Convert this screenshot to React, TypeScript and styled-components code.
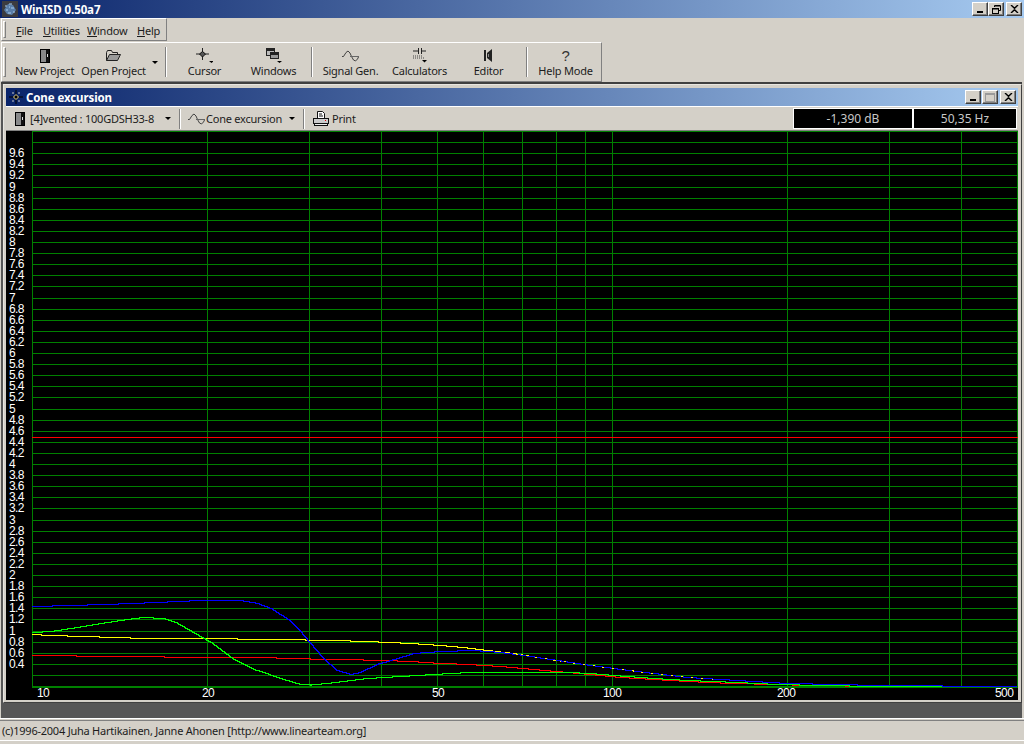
import styled, { createGlobalStyle } from 'styled-components';
import { ReactNode } from 'react';

const GlobalStyle = createGlobalStyle`
  html, body {
    margin: 0;
    padding: 0;
    background: #d4d0c8;
  }
  * {
    box-sizing: border-box;
  }
`;

const uiFont = `'Noto Sans', 'Liberation Sans', sans-serif`;

const Screen = styled.div`
  width: 1024px;
  height: 744px;
  display: flex;
  flex-direction: column;
  overflow: hidden;
  background: #d4d0c8;
  color: #000;
  font: 11px/13px ${uiFont};
  letter-spacing: -0.23px;
`;

const TitleBar = styled.div<{ $small?: boolean }>`
  height: 18px;
  flex: none;
  display: flex;
  align-items: center;
  padding: ${({ $small }) => ($small ? '0 2px 0 3px' : '0 2px 0 2px')};
  background: linear-gradient(90deg, #0a246a, #a6caf0);
  color: #fff;
  font-weight: 700;
  font-size: 11.5px;
  letter-spacing: -0.1px;
`;

const TitleText = styled.span`
  flex: 1;
  margin-left: 3px;
  white-space: nowrap;
`;

const CaptionButton = styled.div<{ $gap?: number; $off?: boolean }>`
  width: 16px;
  height: 14px;
  margin-left: ${({ $gap }) => $gap ?? 0}px;
  display: flex;
  align-items: center;
  justify-content: center;
  background: #d4d0c8;
  border: 1px solid;
  border-color: #fff #404040 #404040 #fff;
  box-shadow: inset -1px -1px 0 #808080;
  color: ${({ $off }) => ($off ? '#9a9a9a' : '#000')};
`;

const MenuRow = styled.div`
  height: 24px;
  flex: none;
  padding: 0 0 1px 1px;
`;

const Band = styled.div<{ $width: number }>`
  width: ${({ $width }) => $width}px;
  height: 100%;
  display: flex;
  align-items: center;
  border: 1px solid;
  border-color: #fff #808080 #808080 #fff;
`;

const Gripper = styled.div`
  width: 3px;
  height: 80%;
  flex: none;
  margin-left: 1px;
  border: 1px solid;
  border-color: #fff #808080 #808080 #fff;
`;

const MenuItem = styled.span<{ $width: number }>`
  width: ${({ $width }) => $width}px;
  flex: none;
  padding-top: 2px;
  color: #1c1c1c;
  white-space: nowrap;
  u {
    text-underline-offset: 1px;
  }
`;

const ToolRow = styled.div`
  height: 40px;
  flex: none;
`;

const ToolBand = styled(Band)`
  margin-left: 1px;
`;

const ToolButton = styled.div<{ $width?: number }>`
  width: ${({ $width }) => $width ?? 69}px;
  height: 100%;
  flex: none;
  display: flex;
  flex-direction: column;
  align-items: center;
  padding-top: 5px;
  color: #1c1c1c;
  white-space: nowrap;
`;

const IconSlot = styled.div`
  height: 15px;
  flex: none;
  margin-bottom: 1px;
  display: flex;
  align-items: center;
  justify-content: center;
`;

const HelpGlyph = styled.span`
  font: 15px/15px 'Liberation Sans', sans-serif;
  color: #333;
`;

const Separator = styled.div<{ $height?: number; $margin?: string }>`
  width: 2px;
  height: ${({ $height }) => $height ?? 30}px;
  flex: none;
  margin: ${({ $margin }) => $margin ?? '0 3px'};
  border-left: 1px solid #808080;
  border-right: 1px solid #fff;
`;

const DropSlot = styled.div<{ $width: number }>`
  width: ${({ $width }) => $width}px;
  flex: none;
  display: flex;
  justify-content: center;
`;

const Arrow = styled.div`
  width: 0;
  height: 0;
  border-left: 3px solid transparent;
  border-right: 3px solid transparent;
  border-top: 3px solid #000;
`;

const Mdi = styled.div`
  flex: 1;
  min-height: 0;
  margin-right: 2px;
  margin-left: 1px;
  padding: 0 0 15px 2px;
  display: flex;
  background: #565656;
  border-top: 2px solid #404040;
`;

const ChildWindow = styled.div`
  flex: 1;
  min-width: 0;
  display: flex;
  flex-direction: column;
  padding: 3px 3px 2px 2px;
  background: #d4d0c8;
  border: 1px solid;
  border-color: #e8e6e0 #404040 #404040 #e8e6e0;
`;

const ChildBar = styled.div`
  height: 25px;
  flex: none;
  display: flex;
  align-items: center;
  padding-left: 2px;
  border-top: 1px solid #fff;
  border-bottom: 1px solid #808080;
  color: #1c1c1c;
  white-space: nowrap;
`;

const ChildLabel = styled.span<{ $width: number }>`
  width: ${({ $width }) => $width}px;
  flex: none;
`;

const ChildIcon = styled.div<{ $left: number; $right: number }>`
  flex: none;
  display: flex;
  margin: 0 ${({ $right }) => $right}px 0 ${({ $left }) => $left}px;
`;

const Readouts = styled.div`
  margin-left: auto;
  margin-right: 1px;
  display: flex;
  gap: 2px;
  background: #fff;
  padding: 1px;
`;

const Readout = styled.div<{ $width: number }>`
  width: ${({ $width }) => $width}px;
  height: 19px;
  display: flex;
  align-items: center;
  justify-content: center;
  background: #000;
  color: #c8c8c8;
  font-size: 12px;
  letter-spacing: 0;
`;

const Chart = styled.svg`
  display: block;
  flex: 1;
  min-height: 0;
  width: 100%;
  background: #000;
  shape-rendering: crispEdges;
`;

const AxisText = styled.text`
  font: 12px 'Liberation Sans', sans-serif;
  letter-spacing: -0.6px;
  fill: #fff;
`;

const StatusBar = styled.div`
  height: 26px;
  flex: none;
  border-top: 1px solid #fff;
`;

const StatusPanel = styled.div`
  height: 21px;
  margin-top: 1px;
  padding-left: 2px;
  display: flex;
  align-items: center;
  border-top: 1px solid #808080;
  border-bottom: 1px solid #fff;
  color: #1c1c1c;
  white-space: nowrap;
`;

// ---- chart data, in page pixels, the svg viewBox starts at the chart's corner

const yOf = (v: number) => 686.5 - v * 55.5;
const xOf = (hz: number) => 32.5 + Math.log10(hz / 10) * 580;

const freqLines = [10, 20, 30, 40, 50, 60, 70, 80, 90, 100, 200, 300, 400, 500];
const freqLabels = [
  { text: '10', x: 37 },
  { text: '20', x: 202 },
  { text: '50', x: 432 },
  { text: '100', x: 603 },
  { text: '200', x: 777 },
  { text: '500', x: 995 },
];
const levels = Array.from({ length: 50 }, (_, i) => Math.round((i + 1) * 2) / 10);

// the program drew its curves pixel by pixel, so walk the points in whole pixels.
// flat runs become steps, steep runs stay one pixel wide diagonals
const stepPath = (pts: number[][]) => {
  let d = `M${pts[0][0]} ${Math.round(pts[0][1]) + 0.5}`;
  for (let i = 1; i < pts.length; i++) {
    const [x0, y0] = pts[i - 1];
    const [x1, y1] = pts[i];
    const steep = Math.abs(y1 - y0) >= (x1 - x0) * 0.4;
    for (let x = x0 + 1; x <= x1; x++) {
      const y = Math.round(y0 + ((y1 - y0) * (x - x0)) / (x1 - x0)) + 0.5;
      d += steep ? `L${x} ${y}` : `H${x}V${y}`;
    }
  }
  return d;
};

const bluePts = [
  [32, 606], [70, 605], [103, 604], [132, 603], [155, 602], [177, 601], [200, 600], [240, 600],
  [257, 603], [273, 609], [290, 620], [300, 630], [310, 642], [323, 657], [337, 670], [350, 674],
  [360, 672], [380, 663], [397, 658], [413, 653], [440, 651], [473, 650], [500, 652], [523, 655],
  [557, 660], [583, 664], [613, 668], [653, 673], [687, 677], [720, 679], [753, 681], [787, 683],
  [837, 684], [877, 685], [942, 685], [943, 686], [1017, 686],
];
const yellowPts = [
  [32, 634], [50, 635], [83, 636], [130, 637.5], [197, 638], [277, 639], [333, 640], [367, 641],
  [410, 643], [440, 645], [467, 647.5], [487, 650], [513, 653], [543, 658], [583, 664], [613, 668],
  [653, 673], [687, 677], [720, 679],
];
const redPts = [
  [32, 655], [76, 655], [77, 656], [164, 656], [165, 657], [276, 657], [277, 658], [343, 659],
  [383, 660], [410, 661], [433, 662.5], [467, 664], [500, 666], [533, 669], [567, 672], [600, 675],
  [620, 677], [653, 679], [687, 681], [720, 682.5], [770, 684], [813, 685], [877, 686],
];
const greenPts = [
  [32, 632], [50, 631], [77, 627], [100, 623], [130, 618.5], [143, 617], [163, 618], [177, 622.5],
  [193, 631.5], [213, 643], [233, 658], [257, 670], [280, 678], [300, 684], [310, 684.5], [330, 682.5],
  [367, 678], [400, 676], [433, 674], [477, 671.5], [533, 671.5], [567, 672], [590, 673], [620, 675.5],
  [653, 678], [687, 680], [737, 682], [777, 684], [820, 685], [877, 686], [943, 686],
];

// ---- small drawings

const Svg = ({ w, h, children }: { w: number; h: number; children: ReactNode }) => (
  <svg width={w} height={h} viewBox={`0 0 ${w} ${h}`} style={{ display: 'block' }}>
    {children}
  </svg>
);

const AppIcon = () => (
  <Svg w={16} h={16}>
    <rect width="16" height="16" fill="#3c3c40" />
    <path d="M2 9l4-6 5 1 3 5-4 5-5-1z" fill="#5a7ea8" />
    <path d="M3 5h2M7 3h3M4 9h2M9 7h3M6 12h3M11 11h2M7 6h1" stroke="#a6cdf0" />
  </Svg>
);

const BoxIcon = () => (
  <Svg w={10} h={14}>
    <rect x=".5" y=".5" width="9" height="13" fill="#8a8a8a" stroke="#000" />
    <rect x="6" y="1" width="3" height="12" fill="#111" />
    <rect x="7" y="5" width="1" height="3" fill="#ddd" />
  </Svg>
);

const FolderIcon = () => (
  <Svg w={15} h={11}>
    <path d="M.5 10.5V2.5l1-2h4l1 2h5v2" fill="none" stroke="#222" />
    <path d="M.5 10.5l3-6h11l-3 6z" fill="#9a9a9a" stroke="#222" />
  </Svg>
);

const CrossIcon = () => (
  <Svg w={17} h={15}>
    <path d="M6.5 0v12M0 6h13" stroke="#222" />
    <path d="M6.5 3.5L9.5 6 6.5 9 3.5 6z" fill="#555" stroke="#111" />
    <path d="M13 13h5l-2.5 2z" fill="#000" />
  </Svg>
);

const WindowsIcon = () => (
  <Svg w={16} h={15}>
    <rect x=".5" y=".5" width="8" height="7" fill="#bbb" stroke="#222" />
    <rect x="1" y="1" width="7" height="2" fill="#222" />
    <rect x="4.5" y="4.5" width="8" height="6" fill="#999" stroke="#222" />
    <rect x="5" y="5" width="7" height="2" fill="#222" />
    <path d="M11 13h5l-2.5 2z" fill="#000" />
  </Svg>
);

const WaveIcon = () => (
  <Svg w={17} h={12}>
    <path
      d="M0 6.500h1.500L4 2.500 6 1 8 3l1.500 3.500L11.500 10l2 1 2-2 1.500-3"
      fill="none"
      stroke="#333"
      strokeWidth="0.900"
    />
    <path d="M8 6.500h9" stroke="#666" />
  </Svg>
);

const CalcIcon = () => (
  <Svg w={16} h={15}>
    <path d="M1 3h5M6.500 0v6M9.500 0v6M10 3h4" stroke="#222" />
    <path d="M1 8h10M1 10h11" stroke="#444" strokeDasharray="1 1" />
    <path d="M10 12h5l-2.500 2.500z" fill="#000" />
  </Svg>
);

const SpeakerIcon = () => (
  <Svg w={9} h={13}>
    <rect x="0" y="1" width="2" height="11" fill="#222" />
    <path d="M3 4l5-4v13L3 9z" fill="#222" />
    <rect x="4" y="5" width="1" height="3" fill="#888" />
  </Svg>
);

const PrinterIcon = () => (
  <Svg w={16} h={16}>
    <path d="M4.500 7V.5h5l2 2V7" fill="#fff" stroke="#111" />
    <path d="M6 3h3M6 5h4" stroke="#111" />
    <rect x=".5" y="7.500" width="15" height="5" fill="#ccc" stroke="#111" />
    <rect x="12" y="9" width="1" height="1" fill="#d00" />
    <rect x="1.500" y="12.500" width="13" height="2" fill="#eee" stroke="#111" />
  </Svg>
);

const MinGlyph = () => (
  <Svg w={8} h={8}>
    <rect x="1" y="6" width="6" height="2" fill="currentColor" />
  </Svg>
);

const RestoreGlyph = () => (
  <Svg w={9} h={9}>
    <path d="M2.500 2V.5h6v5H7" fill="none" stroke="currentColor" />
    <rect x=".5" y="3.500" width="6" height="5" fill="none" stroke="currentColor" />
    <path d="M1 4h5M3 1h5" stroke="currentColor" />
  </Svg>
);

const MaxGlyph = () => (
  <Svg w={10} h={9}>
    <rect x=".5" y=".5" width="9" height="8" fill="none" stroke="currentColor" />
    <path d="M1 1.500h8" stroke="currentColor" />
  </Svg>
);

const CloseGlyph = () => (
  <Svg w={9} h={8}>
    <path d="M1 0l3.500 3.200L8 0M1 8l3.500-3.200L8 8" fill="none" stroke="currentColor" strokeWidth="1.400" />
  </Svg>
);

const ChildTitleIcon = () => (
  <Svg w={14} h={14}>
    <path d="M7 0v14M0 7h14" stroke="#000" />
    <path d="M7 4.500L9.500 7 7 9.500 4.500 7z" fill="#000" stroke="#e8d890" />
    <path d="M3 3h2M9 3h2M3 11h2M9 11h2" stroke="#c8c8c8" />
  </Svg>
);

const tools = [
  { label: 'Cursor', icon: <CrossIcon /> },
  { label: 'Windows', icon: <WindowsIcon /> },
];

const designTools = [
  { label: 'Signal Gen.', icon: <WaveIcon /> },
  { label: 'Calculators', icon: <CalcIcon /> },
  { label: 'Editor', icon: <SpeakerIcon /> },
];

export default function App() {
  return (
    <Screen>
      <GlobalStyle />
      <TitleBar>
        <AppIcon />
        <TitleText>WinISD 0.50a7</TitleText>
        <CaptionButton><MinGlyph /></CaptionButton>
        <CaptionButton><RestoreGlyph /></CaptionButton>
        <CaptionButton $gap={2}><CloseGlyph /></CaptionButton>
      </TitleBar>

      <MenuRow>
        <Band $width={166}>
          <Gripper />
          <MenuItem $width={10} />
          <MenuItem $width={27}><u>F</u>ile</MenuItem>
          <MenuItem $width={44}><u>U</u>tilities</MenuItem>
          <MenuItem $width={50}><u>W</u>indow</MenuItem>
          <MenuItem $width={26}><u>H</u>elp</MenuItem>
        </Band>
      </MenuRow>

      <ToolRow>
        <ToolBand $width={601}>
          <Gripper />
          <MenuItem $width={4} />
          <ToolButton><IconSlot><BoxIcon /></IconSlot>New Project</ToolButton>
          <ToolButton><IconSlot><FolderIcon /></IconSlot>Open Project</ToolButton>
          <DropSlot $width={14}><Arrow /></DropSlot>
          <Separator />
          {tools.map(t => (
            <ToolButton key={t.label}><IconSlot>{t.icon}</IconSlot>{t.label}</ToolButton>
          ))}
          <Separator />
          {designTools.map(t => (
            <ToolButton key={t.label}><IconSlot>{t.icon}</IconSlot>{t.label}</ToolButton>
          ))}
          <Separator />
          <ToolButton><IconSlot><HelpGlyph>?</HelpGlyph></IconSlot>Help Mode</ToolButton>
        </ToolBand>
      </ToolRow>

      <Mdi>
        <ChildWindow>
          <TitleBar $small>
            <ChildTitleIcon />
            <TitleText>Cone excursion</TitleText>
            <CaptionButton><MinGlyph /></CaptionButton>
            <CaptionButton $gap={1} $off><MaxGlyph /></CaptionButton>
            <CaptionButton $gap={2}><CloseGlyph /></CaptionButton>
          </TitleBar>
          <ChildBar>
            <ChildIcon $left={7} $right={5}><BoxIcon /></ChildIcon>
            <ChildLabel $width={126}>[4]vented : 100GDSH33-8</ChildLabel>
            <DropSlot $width={23}><Arrow /></DropSlot>
            <Separator $height={20} $margin="0 7px 0 0" />
            <ChildIcon $left={0} $right={1}><WaveIcon /></ChildIcon>
            <ChildLabel $width={75}>Cone excursion</ChildLabel>
            <DropSlot $width={22}><Arrow /></DropSlot>
            <Separator $height={20} $margin="0 8px 0 0" />
            <ChildIcon $left={0} $right={3}><PrinterIcon /></ChildIcon>
            <ChildLabel $width={30}>Print</ChildLabel>
            <Readouts>
              <Readout $width={118}>-1,390 dB</Readout>
              <Readout $width={102}>50,35 Hz</Readout>
            </Readouts>
          </ChildBar>
          <Chart viewBox="6 131 1012 569" preserveAspectRatio="none">
            {levels.map(v => (
              <line key={v} x1={32} x2={1018} y1={Math.floor(yOf(v)) + 0.5} y2={Math.floor(yOf(v)) + 0.5} stroke="#008000" />
            ))}
            {freqLines.map(f => (
              <line key={f} x1={Math.floor(xOf(f)) + 0.5} x2={Math.floor(xOf(f)) + 0.5} y1={131} y2={687} stroke="#008000" />
            ))}
            <line x1={32} x2={1018} y1={687} y2={687} stroke="#008000" strokeWidth={2} />
            <line x1={32} x2={1018} y1={437.5} y2={437.5} stroke="#ff0000" />
            <path d={stepPath(yellowPts)} fill="none" stroke="#ffff00" />
            <path d={stepPath(redPts)} fill="none" stroke="#ff0000" />
            <path d={stepPath(greenPts)} fill="none" stroke="#00ff00" />
            <path d={stepPath(bluePts)} fill="none" stroke="#0000ff" />
            <path d={stepPath(yellowPts.slice(11))} fill="none" stroke="#ffff00" strokeDasharray="2 9" />
            {levels.slice(1, 48).map(v => (
              <AxisText key={v} x={9} y={yOf(v) + 3.500}>{v}</AxisText>
            ))}
            {freqLabels.map(l => (
              <AxisText key={l.text} x={l.x} y={697}>{l.text}</AxisText>
            ))}
          </Chart>
        </ChildWindow>
      </Mdi>

      <StatusBar>
        <StatusPanel>(c)1996-2004 Juha Hartikainen, Janne Ahonen [http://www.linearteam.org]</StatusPanel>
      </StatusBar>
    </Screen>
  );
}
